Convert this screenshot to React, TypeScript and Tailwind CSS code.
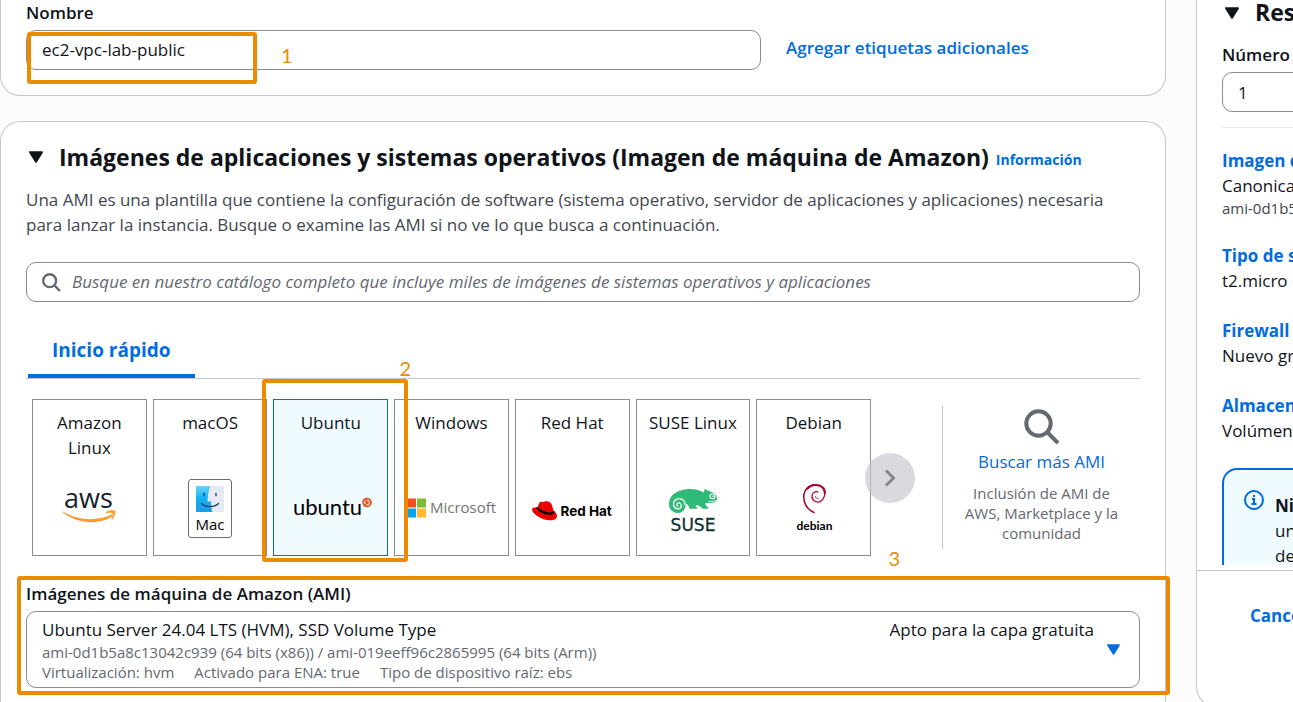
import type { ReactNode } from "react";

function Caret({ className }: { className: string }) {
  return (
    <svg viewBox="0 0 16 12" className={className} aria-hidden="true">
      <path d="M2 1.2h12L8 10.6z" fill="currentColor" stroke="currentColor" strokeWidth="2" strokeLinejoin="round" />
    </svg>
  );
}

function Magnifier({ className, weight = 3.6 }: { className: string; weight?: number }) {
  return (
    <svg viewBox="0 0 36 36" className={className} fill="none" stroke="currentColor" aria-hidden="true">
      <circle cx="14.5" cy="14.5" r="12.2" strokeWidth={weight} />
      <path d="M23.5 23.5 34 34.2" strokeWidth={weight} />
    </svg>
  );
}

function Marker({ className }: { className: string }) {
  return <div className={`pointer-events-none absolute z-10 rounded-[3px] border-4 border-[#ed8b00] ${className}`} />;
}

function MarkerNumber({ className, children }: { className: string; children: ReactNode }) {
  return (
    <span className={`pointer-events-none absolute z-10 font-[Lato,sans-serif] text-[20px] leading-6 text-[#ed8b00] ${className}`}>
      {children}
    </span>
  );
}

function AwsLogo() {
  return (
    <svg width="60" height="44" viewBox="-3 -3 60 44" className="overflow-visible" aria-label="aws">
      <text x="26.500" y="19" textAnchor="middle" fontFamily="Open Sans, sans-serif" fontWeight="500" fontSize="27" fill="#161e2d">aws</text>
      <path d="M1 22.500C15 31.500 35 32.500 49 25.800c1.400-.6 2.400 1 1 2C36 36.500 14 34.500.700 23.300c-.6-.5-.3-1.200.3-.8Z" fill="#ff9a2e" />
      <path d="M44 23c3-2.200 8.500-2 9.200-1.200.8 1-.4 6.500-3 8.700-.5.4-.9.200-.7-.3.800-2 1.600-4.900 1-5.700-.7-.8-4-.7-6-.5-.7 0-.9-.6-.5-1Z" fill="#ff9a2e" />
    </svg>
  );
}

function MacLogo() {
  return (
    <div className="flex h-[59px] w-11 flex-col items-center rounded-[3px] border border-[#6b6b6b] bg-white pt-1.5">
      <svg width="28" height="26" viewBox="0 0 28 26" aria-hidden="true">
        <defs>
          <linearGradient id="finder" x1="0" y1="0" x2="0" y2="1">
            <stop offset="0" stopColor="#6fd0fa" />
            <stop offset=".45" stopColor="#12b3f0" />
            <stop offset="1" stopColor="#1a9be6" />
          </linearGradient>
        </defs>
        <rect width="28" height="26" fill="url(#finder)" />
        <path d="M14.500 0H28v26H16.300c-.8-3-1.200-6-1.200-10.500h-3.600C11.600 9.500 12.600 4.500 14.500 0Z" fill="#e4e9f2" />
        <path d="M8 7.300v2.400M20 7.300v2.400" stroke="#0b2a4a" strokeWidth="1.200" strokeLinecap="round" />
        <path d="M5.500 17.500c4.500 4.200 12.500 4.200 17 0" fill="none" stroke="#123a5e" strokeWidth="1.200" strokeLinecap="round" />
      </svg>
      <span className="text-[15px] leading-6 text-black">Mac</span>
    </div>
  );
}

function UbuntuLogo() {
  return (
    <svg width="80" height="34" viewBox="-1 -5 80 34" className="overflow-visible" aria-label="ubuntu">
      <text x="1" y="19" fontFamily="Lato, sans-serif" fontSize="22" fill="#000">ubuntu</text>
      <circle cx="75" cy="6.500" r="4.800" fill="#e95420" />
      <circle cx="75" cy="6.500" r="2.300" fill="none" stroke="#fff" strokeWidth=".9" strokeDasharray="3.800 1" />
      <circle cx="72.200" cy="6.500" r=".7" fill="#fff" />
      <circle cx="76.400" cy="4.100" r=".7" fill="#fff" />
      <circle cx="76.400" cy="8.900" r=".7" fill="#fff" />
    </svg>
  );
}

function MicrosoftLogo() {
  return (
    <svg width="90" height="30" viewBox="-1 -5 90 30" className="overflow-visible" aria-label="Microsoft">
      <path d="M0 .5h9v9H0z" fill="#f25022" />
      <path d="M10 .5h9v9h-9z" fill="#7fba35" />
      <path d="M0 10.500h9v9H0z" fill="#00a4ef" />
      <path d="M10 10.500h9v9h-9z" fill="#ffb933" />
      <text x="23" y="15" fontFamily="Open Sans, sans-serif" fontWeight="500" fontSize="15" fill="#737373">Microsoft</text>
    </svg>
  );
}

function RedHatLogo() {
  return (
    <svg width="82" height="30" viewBox="-1 -8 82 30" className="overflow-visible" aria-label="Red Hat">
      <path d="M0 8.500C0 6.800 2.200 6 5.500 6.200L7 2.500C7.500 1 9 .6 10.500 1c1.500.300 2-1 4-.7 2.500.2 4.500 1.200 5.200 3.200l1.800 6C24 11 25 13.500 25 15c0 3-3 4.200-7 4.200C10 19.200 0 13 0 8.500Z" fill="#e00" />
      <path d="M5.300 6.500C6 9 12 12.300 17 12.700c2.500.1 4.400-.9 4.500-2.300" fill="none" stroke="#000" strokeWidth="2.300" />
      <text x="28.500" y="14.500" fontFamily="Inter, sans-serif" fontWeight="700" fontSize="13.500" fill="#000">Red Hat</text>
    </svg>
  );
}

function SuseLogo() {
  return (
    <svg width="50" height="54" viewBox="0 -7 50 54" className="overflow-visible" aria-label="SUSE">
      <path d="M1 15C1.500 6 11 1 22 1c6 0 10.500 1.700 14 3.600l.6-3.800L42 3.600C46.500 4.800 49 7 49 10.500c0 3.200-2.500 4.300-6 4.400-3 .1-5-.2-5.500.6-.500 1.200 1.500 2.600 3.500 5.200h-6.500C32.500 18.500 31 17.500 29 17.200c-1.300 0-1.600.6-.8 1.600l1.600 1.900H21.500c-1-3.300-2-4.700-4-4.700C18 21 15 25 9.800 25 4 25 .7 20.500 1 15Z" fill="#30ba78" />
      <path d="M17 16.500C17 11 11 9.300 7.500 12c-3.500 2.900-2.200 8.700 2.200 8.900 4.200 0 4.800-5.600 1.300-6-2.300-.1-2.800 2.600-1.200 3.100" fill="none" stroke="#fff" strokeWidth="1.300" strokeLinecap="round" />
      <circle cx="44.500" cy="8.300" r="2.500" fill="none" stroke="#fff" strokeWidth="1.100" />
      <circle cx="45" cy="8.300" r=".8" fill="#fff" />
      <path d="M40.500 13.400c3 .4 5.500 0 7.700-1.100" fill="none" stroke="#fff" strokeWidth=".8" />
      <text x="25" y="42.500" textAnchor="middle" fontFamily="DejaVu Sans, sans-serif" fontSize="17" fill="#0c322c" stroke="#0c322c" strokeWidth=".3">SUSE</text>
    </svg>
  );
}

function DebianLogo() {
  return (
    <svg width="42" height="52" viewBox="-2 -1 42 52" className="overflow-visible" aria-label="debian">
      <g fill="none" stroke="#a80030" strokeLinecap="round">
        <path d="M19 29.500C12 26.500 8.300 20 8.800 13 9.200 6.500 14 2 20 1.800" strokeWidth="1.500" />
        <path d="M12.500 5.500C17 .8 25 .8 28.500 5.500c1.300 1.700 1.200 3 1.300 4.500" strokeWidth="2.200" />
        <path d="M29.800 9.500c.3 5-3 9.500-7 9.700-4 .1-6.500-3.700-5.700-7 .7-2.700 3.300-4.200 5.800-3.200" strokeWidth="1.300" />
        <path d="M20.500 13.500c.2 1.500 1.500 2.300 3 1.700" strokeWidth=".8" />
      </g>
      <text x="19.500" y="46.500" textAnchor="middle" fontFamily="Lato, sans-serif" fontWeight="700" fontSize="12" fill="#000">debian</text>
    </svg>
  );
}

const systems: { name: string; logo: ReactNode }[] = [
  { name: "Amazon Linux", logo: <AwsLogo /> },
  { name: "macOS", logo: <MacLogo /> },
  { name: "Ubuntu", logo: <UbuntuLogo /> },
  { name: "Windows", logo: <MicrosoftLogo /> },
  { name: "Red Hat", logo: <RedHatLogo /> },
  { name: "SUSE Linux", logo: <SuseLogo /> },
  { name: "Debian", logo: <DebianLogo /> },
];

function SystemTile({ name, logo }: { name: string; logo: ReactNode }) {
  const selected = name === "Ubuntu";
  return (
    <label
      className={`relative flex h-[157px] min-w-0 flex-col items-center border pt-[10px] text-center ${
        selected ? "border-[#006ce0] bg-[#f0fbff]" : "border-[#8c8c94] bg-white"
      }`}
    >
      <input type="radio" name="system" defaultChecked={selected} className="sr-only" />
      <span className="h-[51px] px-3">{name}</span>
      <span className="flex flex-1 items-center justify-center">{logo}</span>
      {selected && (
        <>
          <Marker className="-top-[21px] -right-[21px] -bottom-[7px] -left-[12px]" />
          <MarkerNumber className="-top-[44px] -right-6">2</MarkerNumber>
        </>
      )}
    </label>
  );
}

const summary = [
  { title: "Imagen de software (AMI)", value: "Canonical, Ubuntu, 24.04", note: "ami-0d1b5a8c13042c939" },
  { title: "Tipo de servidor virtual", value: "t2.micro" },
  { title: "Firewall (grupo de seguridad)", value: "Nuevo grupo de seguridad" },
  { title: "Almacenamiento (volúmenes)", value: "Volúmenes: 1" },
];

export default function App() {
  return (
    <div className="flex h-screen gap-[30px] overflow-hidden bg-[#fcfcfd] font-['Open_Sans',sans-serif] text-[17px] leading-[25px] text-[#0f141a]">
      <main className="flex min-w-0 flex-1 flex-col gap-[25px]">
        <section className="grid grid-cols-[735fr_354fr] gap-[25px] rounded-b-[20px] border-x border-b border-[#c6c6cd] bg-white px-[25px] pb-[25px]">
          <div className="relative">
            <label htmlFor="nombre" className="block font-semibold">Nombre</label>
            <input
              id="nombre"
              defaultValue="ec2-vpc-lab-public"
              className="mt-[5px] block h-10 w-full rounded-[10px] border border-[#8c8c94] bg-white px-[15px] pb-[2px]"
            />
            <Marker className="top-8 left-px h-[52px] w-[230px]" />
            <MarkerNumber className="top-[43px] left-[255px]">1</MarkerNumber>
          </div>
          <a href="#etiquetas" className="mb-[10px] self-end font-semibold text-[#006ce0]">Agregar etiquetas adicionales</a>
        </section>

        <section className="flex-1 rounded-t-[20px] border-x border-t border-[#c6c6cd] bg-white px-[25px] pt-5">
          <div className="flex items-center">
            <button type="button" aria-label="Contraer" className="ml-[2px]">
              <Caret className="h-3 w-4" />
            </button>
            <h2 className="ml-[15px] text-[23px] leading-[30px] font-bold whitespace-nowrap">
              Imágenes de aplicaciones y sistemas operativos (Imagen de máquina de Amazon)
            </h2>
            <a href="#info" className="ml-[7px] pt-[5px] text-[14px] font-bold text-[#006ce0]">Información</a>
          </div>
          <p className="mt-[15px] text-[#424650]">
            Una AMI es una plantilla que contiene la configuración de software (sistema operativo, servidor de aplicaciones y aplicaciones) necesaria para lanzar la instancia. Busque o examine las AMI si no ve lo que busca a continuación.
          </p>

          <div className="mt-[25px] flex h-10 items-center gap-[11px] rounded-[10px] border border-[#8c8c94] px-[15px]">
            <Magnifier weight={4.4} className="size-[19px] shrink-0 text-[#656871]" />
            <input
              type="search"
              aria-label="Buscar AMI"
              placeholder="Busque en nuestro catálogo completo que incluye miles de imágenes de sistemas operativos y aplicaciones"
              className="min-w-0 flex-1 pb-[2px] outline-none placeholder:text-[#656871] placeholder:italic"
            />
          </div>

          <div role="tablist" className="mt-[33px] flex border-b border-[#c6c6cd] pl-[2px]">
            <button type="button" role="tab" aria-selected="true" className="border-b-4 border-[#006ce0] px-6 pb-[9px] text-[19px] leading-[30px] font-bold text-[#006ce0]">
              Inicio rápido
            </button>
          </div>

          <div className="mt-5 flex items-center pl-1.5">
            <div className="grid flex-1 grid-cols-7 gap-1.5">
              {systems.map((s) => (
                <SystemTile key={s.name} name={s.name} logo={s.logo} />
              ))}
            </div>
            <button type="button" aria-label="Siguiente" className="relative -ml-1.5 flex size-[50px] items-center justify-center rounded-full bg-[#c6c6cd]/65">
              <svg viewBox="0 0 12 18" className="h-[18px] w-3" fill="none" stroke="#85868d" strokeWidth="3" aria-hidden="true">
                <path d="m2 1.500 7.500 7.500L2 16.500" />
              </svg>
            </button>
            <div className="ml-[27px] flex h-[143px] w-[198px] flex-col items-center border-l border-[#c6c6cd] pt-[3px] text-center">
              <Magnifier weight={4} className="size-9 text-[#656871]" />
              <a href="#buscar" className="mt-1 text-[#006ce0]">Buscar más AMI</a>
              <p className="mt-[9px] px-4 text-[15px] leading-5 text-[#656871]">Inclusión de AMI de AWS, Marketplace y la comunidad</p>
            </div>
          </div>

          <div className="relative mt-[25px]">
            <div id="ami-label" className="font-semibold">Imágenes de máquina de Amazon (AMI)</div>
            <button
              type="button"
              aria-haspopup="listbox"
              aria-labelledby="ami-label"
              className="mt-[5px] flex w-full items-center rounded-[10px] border border-[#8c8c94] bg-white py-[5px] pr-[18px] pl-[15px] text-left"
            >
              <span className="flex-1 text-[15px] leading-5 text-[#656871]">
                <span className="flex justify-between text-[17px] leading-[25px] text-[#0f141a]">
                  <span>Ubuntu Server 24.04 LTS (HVM), SSD Volume Type</span>
                  <span>Apto para la capa gratuita</span>
                </span>
                <span className="block">ami-0d1b5a8c13042c939 (64 bits (x86)) / ami-019eeff96c2865995 (64 bits (Arm))</span>
                <span className="flex gap-5">
                  <span>Virtualización: hvm</span>
                  <span>Activado para ENA: true</span>
                  <span>Tipo de dispositivo raíz: ebs</span>
                </span>
              </span>
              <Caret className="ml-3 h-[11px] w-[15px] text-[#006ce0]" />
            </button>
            <Marker className="-top-[5px] -right-[30px] -bottom-[7px] -left-[9px]" />
            <MarkerNumber className="-top-[35px] right-[240px]">3</MarkerNumber>
          </div>
        </section>
      </main>

      <aside className="flex h-[707px] w-[97px] shrink-0 flex-col overflow-hidden rounded-bl-[20px] border-b border-l border-[#c6c6cd] bg-white whitespace-nowrap">
        <div className="h-[565px] overflow-hidden pl-[25px]">
          <div className="flex items-center">
            <button type="button" aria-label="Contraer resumen" className="ml-[2px]">
              <Caret className="h-3 w-4" />
            </button>
            <h2 className="ml-[15px] text-[23px] leading-[25px] font-bold">Resumen</h2>
          </div>
          <label htmlFor="instancias" className="mt-[17px] block font-semibold">Número de instancias</label>
          <input id="instancias" defaultValue="1" className="mt-[5px] block h-10 w-[380px] rounded-[10px] border border-[#8c8c94] px-[15px]" />
          <hr className="mt-[15px] border-[#ebebf0]" />
          <dl className="mt-5 flex flex-col gap-[25px]">
            {summary.map((s) => (
              <div key={s.title}>
                <dt><a href="#editar" className="font-bold text-[#006ce0]">{s.title}</a></dt>
                <dd>{s.value}</dd>
                {s.note && <dd className="text-[15px] leading-5 text-[#424650]">{s.note}</dd>}
              </div>
            ))}
          </dl>
          <div className="mt-[25px] flex w-[380px] gap-[11px] rounded-[15px] border-2 border-[#006ce0] bg-[#f0fbff] py-[23px] pl-5">
            <svg viewBox="0 0 20 20" className="-mt-[3px] size-5 shrink-0 text-[#006ce0]" fill="none" stroke="currentColor" strokeWidth="2" aria-hidden="true">
              <circle cx="10" cy="10" r="9" />
              <path d="M8 9h2v5M7.500 14h5M10 5v2" />
            </svg>
            <p className="text-[17px]">
              <b>Nivel gratuito:</b> El primer año<br />un uso de 750 horas<br />de instancias t2.micro
            </p>
          </div>
        </div>
        <div className="mt-[5px] flex-1 border-t border-[#c6c6cd] pt-8 pl-[53px]">
          <button type="button" className="font-bold text-[#006ce0]">Cancelar</button>
        </div>
      </aside>
    </div>
  );
}
